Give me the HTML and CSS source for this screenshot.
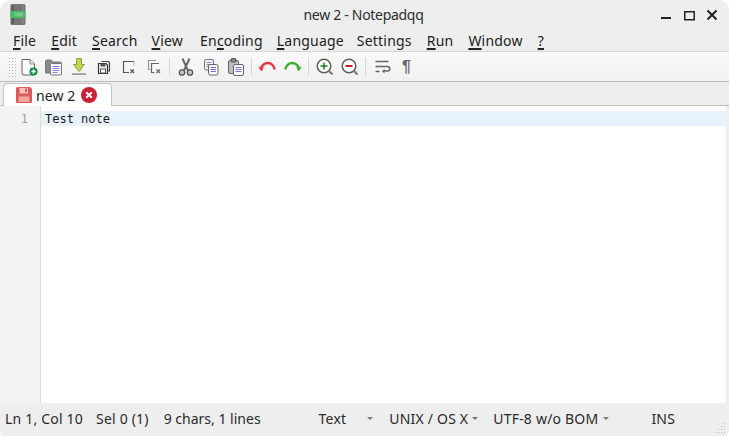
FILE: index.html
```html
<!DOCTYPE html>
<html lang="en">
<head>
<meta charset="utf-8">
<title>new 2 - Notepadqq</title>
<link rel="stylesheet" href="styles.css">
</head>
<body>
<div class="window">
  <header class="titlebar">
    <svg class="app-icon" width="16" height="21" viewBox="0 0 16 21">
      <rect x="0.5" y="0" width="15" height="21" rx="1.5" fill="#757575"/>
      <rect x="1" y="1" width="3" height="19" fill="#5f5f5f"/>
      <rect x="0.5" y="7" width="15" height="7" fill="#45bd62"/>
      <rect x="12.5" y="0" width="1" height="21" fill="#8f8f8f"/>
      <path d="M4 9h2M4 11h2M7 9h2v3H7zM10 9h2v3h-2z" stroke="#a8e0b8" stroke-width="0.6" fill="none"/>
    </svg>
    <div class="title">new 2 - Notepadqq</div>
    <div class="win-controls">
      <svg width="80" height="17" viewBox="0 0 80 17">
        <rect x="11" y="11" width="10" height="2" fill="#222"/>
        <rect x="34.75" y="5.75" width="9.5" height="8" fill="none" stroke="#222" stroke-width="1.5"/>
        <path d="M57.500 4.500 L66.500 13.500 M66.500 4.500 L57.500 13.500" stroke="#222" stroke-width="2" fill="none"/>
      </svg>
    </div>
  </header>
  <nav class="menubar">
    <span class="menu m-file"><u>F</u>ile</span>
    <span class="menu m-edit"><u>E</u>dit</span>
    <span class="menu m-search"><u>S</u>earch</span>
    <span class="menu m-view"><u>V</u>iew</span>
    <span class="menu m-enc">En<u>c</u>oding</span>
    <span class="menu m-lang"><u>L</u>anguage</span>
    <span class="menu m-set">Settin<u>g</u>s</span>
    <span class="menu m-run"><u>R</u>un</span>
    <span class="menu m-win"><u>W</u>indow</span>
    <span class="menu m-help"><u>?</u></span>
  </nav>
  <div class="toolbar">
    <div class="grip"></div>
    <span class="btn"><svg width="20" height="20" viewBox="0 0 20 20"><path d="M3 2.500h8l4.500 4.500v9a2 2 0 0 1-2 2h-8.500a2 2 0 0 1-2-2z" fill="#fafafa" stroke="#666" stroke-width="1"/><path d="M11 2.500v4.500h4.500" fill="#e8e8e8" stroke="#888"/><circle cx="14.500" cy="14.500" r="4" fill="#0f8a3c"/><path d="M12.300 14.500h4.400M14.500 12.300v4.400" stroke="#fff" stroke-width="1.600"/></svg></span>
    <span class="btn"><svg width="20" height="20" viewBox="0 0 20 20"><path d="M1.500 4.500a1.500 1.500 0 0 1 1.500-1.500h4l2 2h7a1.500 1.500 0 0 1 1.500 1.500v9.500h-16z" fill="#8a8a8a" stroke="#777"/><rect x="6.500" y="6.500" width="11" height="11.500" rx="1" fill="#f6f6fb" stroke="#777"/><path d="M8.500 9.500h7M8.500 11.500h7M8.500 13.500h7M8.500 15.500h5" stroke="#8f86d8"/></svg></span>
    <span class="btn"><svg width="20" height="20" viewBox="0 0 20 20"><path d="M7.500 1.500h5v6h3l-5.500 7-5.500-7h3z" fill="#b9d84e" stroke="#8aa636"/><rect x="3" y="16.500" width="14" height="1.200" fill="#777"/></svg></span>
    <span class="btn"><svg width="20" height="20" viewBox="0 0 20 20"><path d="M7.500 4.500h7l1 1v8.500h-2" fill="none" stroke="#444" stroke-width="1.200"/><path d="M4.500 6.500h7.500l1.500 1.500v8.500h-9z" fill="#f4f4f4" stroke="#333" stroke-width="1.200"/><rect x="6.500" y="6.500" width="5" height="3" fill="#555"/><rect x="6.500" y="12" width="5" height="4" fill="#fff" stroke="#555"/></svg></span>
    <span class="btn"><svg width="20" height="20" viewBox="0 0 20 20"><path d="M15 4V4.500H4.500V15.500H10" fill="none" stroke="#555" stroke-width="1.200"/><path d="M15 4V9" stroke="#bbb"/><path d="M11.500 12.500l3.500 3.500M15 12.500l-3.500 3.500" stroke="#555" stroke-width="1.200"/></svg></span>
    <span class="btn"><svg width="20" height="20" viewBox="0 0 20 20"><path d="M12 3.500h-7.500v9h2" fill="none" stroke="#999" stroke-width="1.200"/><path d="M15 6.500h-7.500v9h3" fill="none" stroke="#666" stroke-width="1.200"/><path d="M12.500 12.500l3.500 3.500M16 12.500l-3.500 3.500" stroke="#666" stroke-width="1.200"/></svg></span>
    <span class="sep"></span>
    <span class="btn"><svg width="20" height="20" viewBox="0 0 20 20"><path d="M6.500 1.500l5.500 12M13.500 1.500l-5.500 12" stroke="#666" stroke-width="2" fill="none"/><circle cx="6" cy="15.500" r="2.700" fill="#c8c8c8" stroke="#555" stroke-width="1.300"/><circle cx="14" cy="15.500" r="2.700" fill="#c8c8c8" stroke="#555" stroke-width="1.300"/></svg></span>
    <span class="btn"><svg width="20" height="20" viewBox="0 0 20 20"><rect x="3.500" y="2.500" width="9" height="10.500" rx="1.500" fill="#f4f4f8" stroke="#777"/><path d="M5.500 5.500h5M5.500 7.500h5M5.500 9.500h5" stroke="#8f86d8"/><rect x="7.500" y="7.500" width="9.500" height="10.500" rx="1.500" fill="#fafaff" stroke="#666"/><path d="M9.500 10.500h5.500M9.500 12.500h5.500M9.500 14.500h5.500" stroke="#7b72d0"/></svg></span>
    <span class="btn"><svg width="20" height="20" viewBox="0 0 20 20"><rect x="2.500" y="3.500" width="10" height="13" rx="1.500" fill="#bdbdbd" stroke="#666"/><rect x="5" y="1.500" width="5" height="3.500" rx="1" fill="#888" stroke="#555"/><rect x="7.500" y="7.500" width="10" height="11" rx="1.500" fill="#fafaff" stroke="#666"/><path d="M9.500 10.500h6M9.500 12.500h6M9.500 14.500h6" stroke="#7b72d0"/></svg></span>
    <span class="sep"></span>
    <span class="btn"><svg width="20" height="20" viewBox="0 0 20 20"><path d="M3 13a6.700 6.700 0 0 1 13.500 -0.500" fill="none" stroke="#ee3048" stroke-width="2.400"/><path d="M0.300 9.800l5.500 0.500-2.300 4.200z" fill="#ee3048"/></svg></span>
    <span class="btn"><svg width="20" height="20" viewBox="0 0 20 20"><path d="M16 13a6.700 6.700 0 0 0-13.500-0.500" fill="none" stroke="#3fae2e" stroke-width="2.400"/><path d="M18.700 9.800l-5.500 0.500 2.300 4.200z" fill="#3fae2e"/></svg></span>
    <span class="sep"></span>
    <span class="btn"><svg width="20" height="20" viewBox="0 0 20 20"><circle cx="9" cy="9" r="6.800" fill="#fdfdfd" stroke="#5f5f55" stroke-width="1.500"/><path d="M14 14l3.500 3.500" stroke="#7a7a70" stroke-width="2.200"/><path d="M5.500 9h7M9 5.500v7" stroke="#16802a" stroke-width="1.500"/></svg></span>
    <span class="btn"><svg width="20" height="20" viewBox="0 0 20 20"><circle cx="9" cy="9" r="6.800" fill="#fdfdfd" stroke="#5f5f55" stroke-width="1.500"/><path d="M14 14l3.500 3.500" stroke="#7a7a70" stroke-width="2.200"/><path d="M5.500 9h7" stroke="#c8202f" stroke-width="2"/></svg></span>
    <span class="sep"></span>
    <span class="btn"><svg width="20" height="20" viewBox="0 0 20 20"><path d="M3.500 4.500h13M3.500 9.500h12a2.300 2.300 0 0 1 0 4.600h-4M3.500 14.500h4" fill="none" stroke="#666" stroke-width="1.500"/><path d="M12.500 12l-2.500 2.200 2.500 2.200z" fill="#666"/></svg></span>
    <span class="btn"><span class="pilcrow">¶</span></span>
  </div>
  <div class="tabbar">
    <div class="tab">
      <svg width="16" height="16" viewBox="0 0 16 16"><path d="M0 1.500a1.500 1.500 0 0 1 1.500-1.500h12.500l2 2v12.500a1.500 1.500 0 0 1-1.500 1.500h-13a1.500 1.500 0 0 1-1.500-1.500z" fill="#dc5a5a"/><rect x="3.500" y="1" width="8.500" height="5.500" fill="#f6c4c0"/><rect x="9" y="1.500" width="2" height="3.500" fill="#dc5a5a"/><rect x="2.500" y="9.500" width="11" height="5.500" fill="#f1a9a0"/></svg>
      <span class="tab-label">new 2</span>
      <svg class="tab-close" width="16" height="16" viewBox="0 0 16 16"><circle cx="8" cy="8" r="8" fill="#cc1f35"/><path d="M5.200 5.200l5.600 5.600M10.800 5.200l-5.600 5.600" stroke="#fff" stroke-width="2"/></svg>
    </div>
  </div>
  <main class="editor">
    <div class="gutter"><span class="lineno">1</span></div>
    <div class="content"><div class="line">Test note</div></div>
  </main>
  <footer class="statusbar">
    <span class="st st-pos">Ln 1, Col 10</span>
    <span class="st st-sel">Sel 0 (1)</span>
    <span class="st st-len">9 chars, 1 lines</span>
    <span class="st st-lang">Text</span><span class="arrow a-lang"></span>
    <span class="st st-eol">UNIX / OS X</span><span class="arrow a-eol"></span>
    <span class="st st-enc">UTF-8 w/o BOM</span><span class="arrow a-enc"></span>
    <span class="st st-ins">INS</span>
    <svg class="size-grip" width="12" height="12" viewBox="0 0 12 12"><path d="M9 1h1v1H9zM6 4h1v1H6zM9 4h1v1H9zM3 7h1v1H3zM6 7h1v1H6zM9 7h1v1H9zM0 10h1v1H0zM3 10h1v1H3zM6 10h1v1H6zM9 10h1v1H9z" fill="#bbb"/></svg>
  </footer>
</div>
</body>
</html>
```

FILE: styles.css
```css
* { box-sizing: border-box; }
html, body { margin: 0; height: 100%; background: #ffffff; }
body { overflow: hidden; }
.window {
  width: 729px;
  height: 436px;
  display: flex;
  flex-direction: column;
  background: #eeeeee;
  border-radius: 10px 10px 6px 6px;
  overflow: hidden;
  font-family: "Noto Sans", sans-serif;
  font-size: 14px;
  color: #222222;
}
.titlebar {
  height: 29px;
  flex: none;
  display: flex;
  align-items: center;
  position: relative;
  padding-left: 10px;
}
.title {
  position: absolute;
  left: 0;
  right: 2px;
  text-align: center;
  font-size: 14px;
  letter-spacing: -0.3px;
  color: #2d2d2d;
}
.win-controls {
  margin-left: auto;
  display: flex;
  margin-right: -1px;
}
.menubar {
  height: 23px;
  flex: none;
  display: flex;
  align-items: center;
  padding-left: 13px;
  padding-top: 1px;
  border-bottom: 1px solid #d4d4d4;
  letter-spacing: 0.2px;
}
.menu { white-space: nowrap; color: #222222; }
.menu u { text-decoration-thickness: 2px; text-underline-offset: 2px; }
.m-edit { margin-left: 15px; }
.m-search { margin-left: 15px; }
.m-view { margin-left: 14px; }
.m-enc { margin-left: 17px; }
.m-lang { margin-left: 14px; }
.m-set { margin-left: 13px; }
.m-run { margin-left: 15px; }
.m-win { margin-left: 15px; }
.m-help { margin-left: 15px; }
.toolbar {
  height: 30px;
  flex: none;
  display: flex;
  align-items: center;
  padding-left: 8px;
  padding-top: 1px;
  background: linear-gradient(#f9f9f9, #f1f1f1);
  border-bottom: 1px solid #bdbdbd;
}
.grip {
  width: 8px;
  height: 20px;
  flex: none;
  background-image: radial-gradient(#b5b5b5 0.6px, transparent 0.8px);
  background-size: 3px 3px;
}
.btn {
  width: 25px;
  height: 24px;
  flex: none;
  display: flex;
  align-items: center;
  justify-content: center;
}
.sep {
  width: 7px;
  height: 18px;
  flex: none;
  background: linear-gradient(#d8d8d8, #d8d8d8) center / 1px 100% no-repeat;
}
.pilcrow { font-size: 16px; font-weight: 700; color: #666666; font-family: "Liberation Sans", sans-serif; }
.tabbar {
  height: 24px;
  flex: none;
  padding-left: 3px;
  padding-top: 1px;
  border-bottom: 1px solid #bdbdbd;
  display: flex;
}
.tab {
  width: 109px;
  height: 23px;
  display: flex;
  align-items: center;
  padding-left: 12px;
  background: #ffffff;
  border: 1px solid #c4c4c4;
  border-bottom: none;
  border-radius: 4px 4px 0 0;
}
.tab-label { margin-left: 4px; font-size: 14px; color: #222222; letter-spacing: 0.1px; }
.tab-close { margin-left: 6px; }
.editor {
  flex: 1;
  min-height: 0;
  display: flex;
  margin-right: 3px;
  background: #ffffff;
}
.gutter {
  width: 41px;
  flex: none;
  background: #f3f3f3;
  border-right: 1px solid #dcdcdc;
  padding-top: 5px;
  font-family: "DejaVu Sans Mono", monospace;
  font-size: 12px;
  line-height: 17px;
  color: #a0a0a0;
  text-align: right;
  padding-right: 12px;
}
.content {
  flex: 1;
  padding-top: 5px;
  font-family: "DejaVu Sans Mono", monospace;
  font-size: 12px;
  line-height: 17px;
  color: #1a1a1a;
}
.line { height: 15px; background: #e8f2fc; padding-left: 4px; }
.statusbar {
  height: 33px;
  flex: none;
  display: flex;
  align-items: center;
  position: relative;
  padding-left: 5px;
  padding-bottom: 2px;
  white-space: nowrap;
  letter-spacing: 0.2px;
}
.st { color: #2a2a2a; }
.st-sel { margin-left: 13px; }
.st-len { margin-left: 15px; letter-spacing: 0; }
.st-lang { margin-left: 58px; }
.st-eol { margin-left: 16px; }
.st-enc { margin-left: 15px; }
.st-ins { margin-left: 42px; }
.arrow {
  width: 0;
  height: 0;
  margin-left: 21px;
  border-left: 3px solid transparent;
  border-right: 3px solid transparent;
  border-top: 3px solid #777777;
}
.a-eol { margin-left: 4px; }
.a-enc { margin-left: 5px; }
.size-grip { position: absolute; right: 2px; bottom: 2px; }
```
